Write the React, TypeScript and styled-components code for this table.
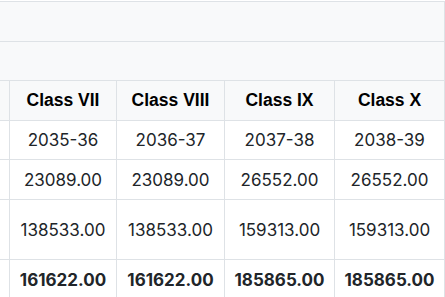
import React, { FC, useLayoutEffect, useRef } from 'react';
import styled, { createGlobalStyle } from 'styled-components';

const GlobalStyle = createGlobalStyle`
    html, body {
        margin: 0;
        padding: 0;
        background: #ffffff;
    }
`;

const Scroller = styled.div`
    width: 445px;
    height: 297px;
    padding-top: 1px;
    box-sizing: border-box;
    overflow: hidden;
`;

const Table = styled.table`
    border-collapse: collapse;
    table-layout: fixed;
    width: 634px;
    font-family: Inter, 'Noto Sans', sans-serif;
    color: #212529;
`;

const Cell = styled.td<{ $h?: number }>`
    border: 1px solid #dee2e6;
    height: ${(p) => (p.$h ? `${p.$h - 1}px` : 'auto')};
    padding: 0 2px;
    text-align: center;
    vertical-align: middle;
    font-size: 17px;
    background: #ffffff;
    white-space: nowrap;
`;

const HeadCell = styled.th<{ $h?: number; $left?: boolean }>`
    border: 1px solid #dee2e6;
    height: ${(p) => (p.$h ? `${p.$h - 1}px` : 'auto')};
    padding: 0 2px;
    text-align: ${(p) => (p.$left ? 'left' : 'center')};
    vertical-align: middle;
    background: #f8f9fa;
    font-family: 'Liberation Sans', Arial, sans-serif;
    font-weight: 700;
    font-size: 17.5px;
    color: #000000;
    white-space: nowrap;
`;

const TotalCell = styled(Cell)`
    font-weight: 700;
`;

type Col = { name: string; year: string; fee: string; annual: string; total: string };

const cols: Col[] = [
    { name: 'Class VII', year: '2035-36', fee: '23089.00', annual: '138533.00', total: '161622.00' },
    { name: 'Class VIII', year: '2036-37', fee: '23089.00', annual: '138533.00', total: '161622.00' },
    { name: 'Class IX', year: '2037-38', fee: '26552.00', annual: '159313.00', total: '185865.00' },
    { name: 'Class X', year: '2038-39', fee: '26552.00', annual: '159313.00', total: '185865.00' },
];

const widths = [200, 107, 108, 110, 110];

export const FeeTable: FC = () => {
    const ref = useRef<HTMLDivElement>(null);

    // the table is scrolled so only the class columns show
    useLayoutEffect(() => {
        if (ref.current) ref.current.scrollLeft = 194;
    }, []);

    return (
        <Scroller ref={ref}>
            <Table>
                <colgroup>
                    {widths.map((w, i) => (
                        <col key={i} style={{ width: w }} />
                    ))}
                </colgroup>
                <thead>
                    <tr>
                        <HeadCell $h={40} $left colSpan={5}>Fee Structure</HeadCell>
                    </tr>
                    <tr>
                        <HeadCell $h={39} $left colSpan={5}>Year wise</HeadCell>
                    </tr>
                    <tr>
                        <HeadCell $h={40}>Class</HeadCell>
                        {cols.map((c) => (
                            <HeadCell key={c.name}>{c.name}</HeadCell>
                        ))}
                    </tr>
                </thead>
                <tbody>
                    <tr>
                        <Cell $h={39}>Session</Cell>
                        {cols.map((c) => (
                            <Cell key={c.name}>{c.year}</Cell>
                        ))}
                    </tr>
                    <tr>
                        <Cell $h={40}>Admission</Cell>
                        {cols.map((c) => (
                            <Cell key={c.name}>{c.fee}</Cell>
                        ))}
                    </tr>
                    <tr>
                        <Cell $h={60}>Tuition</Cell>
                        {cols.map((c) => (
                            <Cell key={c.name}>{c.annual}</Cell>
                        ))}
                    </tr>
                    <tr>
                        <TotalCell $h={40}>Total</TotalCell>
                        {cols.map((c) => (
                            <TotalCell key={c.name}>{c.total}</TotalCell>
                        ))}
                    </tr>
                </tbody>
            </Table>
        </Scroller>
    );
};

export default function App() {
    return (
        <>
            <GlobalStyle />
            <FeeTable />
        </>
    );
}
